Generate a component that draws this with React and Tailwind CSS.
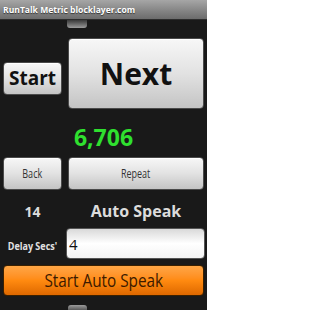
import React from 'react';

const btn = "rounded-[4px] border border-[#4a4a4a] bg-linear-to-b from-[#f7f7f7] via-[#e2e2e2] to-[#c4c4c4] shadow-[inset_0_1px_0_#ffffff] flex items-center justify-center";

const App = () => {
    return (
        <div className="w-[207px] h-[310px] overflow-hidden bg-[#191919] flex flex-col font-['Open_Sans','Noto_Sans',sans-serif]">
            {/* title bar */}
            <div className="h-[20px] shrink-0 bg-linear-to-b from-[#a6a6a6] to-[#6c6c6c] border-b border-[#2c2c2c] px-[3px] text-[9.5px] font-bold leading-[19px] text-white [text-shadow:0_1px_1px_#333] whitespace-nowrap">
                <span className="inline-block scale-x-90 origin-left">RunTalk Metric blocklayer.com</span>
            </div>

            {/* bottom of a button scrolled off screen */}
            <div className="h-[18px] shrink-0 pl-[67px]">
                <div className="w-[20px] h-[8px] rounded-b-[3px] bg-linear-to-b from-[#3a3a3a] to-[#9c9c9c]"></div>
            </div>

            <div className="h-[71px] shrink-0 flex gap-[6px] px-[3px]">
                <div className="w-[59px] pt-[24px]">
                    <div className={btn + " h-[33px]"}>
                        <span className="text-[19px] font-bold text-[#111] leading-none">Start</span>
                    </div>
                </div>
                <div className={btn + " flex-1 h-[71px]"}>
                    <span className="text-[30px] font-bold text-[#111] leading-none">Next</span>
                </div>
            </div>

            <div className="h-[48px] shrink-0 flex items-center justify-center pt-[8px]">
                <span className="text-[23px] font-bold text-[#2fe02f] leading-none">6,706</span>
            </div>

            <div className="h-[33px] shrink-0 flex gap-[6px] px-[3px]">
                <div className={btn + " w-[59px]"}>
                    <span className="inline-block scale-x-75 text-[12px] text-[#333]">Back</span>
                </div>
                <div className={btn + " flex-1"}>
                    <span className="inline-block scale-x-75 text-[12px] text-[#333]">Repeat</span>
                </div>
            </div>

            <div className="h-[36px] shrink-0 flex gap-[6px] px-[3px] pt-[6px] items-center text-[#dcdcdc] font-bold">
                <div className="w-[59px] text-center text-[14px]">14</div>
                <div className="flex-1 text-center text-[16px]">Auto Speak</div>
            </div>

            <div className="h-[31px] mt-[2px] shrink-0 flex items-center pl-[3px] pr-[2px] gap-[4px]">
                <div className="w-[59px] text-center">
                    <span className="inline-block scale-x-90 text-[10px] font-bold text-[#e2e2e2] whitespace-nowrap">Delay Secs'</span>
                </div>
                <input
                    readOnly
                    value="4"
                    className="flex-1 min-w-0 h-[31px] rounded-[4px] border border-[#555] bg-linear-to-b from-[#d9d9d9] via-[#ffffff] to-[#f4f4f4] px-[2px] text-[15px] text-[#111] outline-none font-['Open_Sans',sans-serif]"
                />
            </div>

            <div className="mt-[6px] h-[31px] shrink-0 px-[3px]">
                <div className="h-full rounded-[4px] border border-[#3a2000] bg-linear-to-b from-[#ffa645] via-[#ff8a10] to-[#de6800] flex items-center justify-center">
                    <span className="inline-block scale-x-85 text-[18px] text-[#3c1a00] whitespace-nowrap">Start Auto Speak</span>
                </div>
            </div>

            <div className="mt-[9px] h-[5px] shrink-0 pl-[68px]">
                <div className="w-[19px] h-[5px] rounded-t-[3px] bg-linear-to-b from-[#9c9c9c] to-[#5a5a5a]"></div>
            </div>
        </div>
    );
};

export default App;
